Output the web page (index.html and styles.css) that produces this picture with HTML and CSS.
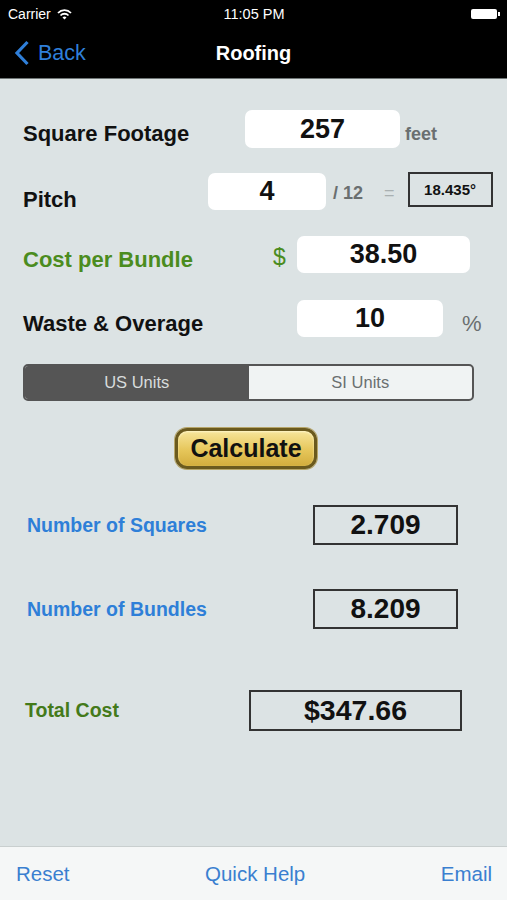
FILE: index.html
```html
<!DOCTYPE html>
<html lang="en">
<head>
  <meta charset="UTF-8">
  <meta name="viewport" content="width=device-width, initial-scale=1.0">
  <title>Roofing</title>
  <link rel="stylesheet" href="styles.css">
</head>
<body>

  <div class="topBar">
    <div class="statusBar">
      <span class="carrier">Carrier
        <svg class="wifi" width="15" height="11" viewBox="0 0 15 11">
          <path d="M1 4 A9 9 0 0 1 14 4" fill="none" stroke="#fff" stroke-width="1.8"/>
          <path d="M3.5 6.5 A5.5 5.5 0 0 1 11.5 6.5" fill="none" stroke="#fff" stroke-width="1.8"/>
          <path d="M7.5 10.5 L5.5 8.5 A3 3 0 0 1 9.5 8.5 Z" fill="#fff"/>
        </svg>
      </span>
      <span class="clock">11:05 PM</span>
      <span class="battery"><span class="batteryCap"></span></span>
    </div>
    <div class="navBar">
      <span class="backLink">
        <svg width="16" height="26" viewBox="0 0 16 26">
          <path d="M13.5 2 L3 13 L13.5 24" fill="none" stroke="#2f7fd9" stroke-width="3.2"/>
        </svg>
        Back
      </span>
      <span class="navTitle">Roofing</span>
    </div>
  </div>

  <div class="main">
    <div class="row rowFootage">
      <span class="label labelFootage">Square Footage</span>
      <span class="inputBox boxFootage">257</span>
      <span class="unit unitFeet">feet</span>
    </div>

    <div class="row rowPitch">
      <span class="label labelPitch">Pitch</span>
      <span class="inputBox boxPitch">4</span>
      <span class="unit unitTwelve">/ 12</span>
      <span class="equals">=</span>
      <span class="angleBox">18.435°</span>
    </div>

    <div class="row rowCost">
      <span class="label labelCost green">Cost per Bundle</span>
      <span class="dollar">$</span>
      <span class="inputBox boxCost">38.50</span>
    </div>

    <div class="row rowWaste">
      <span class="label labelWaste">Waste &amp; Overage</span>
      <span class="inputBox boxWaste">10</span>
      <span class="percent">%</span>
    </div>

    <div class="segment">
      <span class="segItem active">US Units</span>
      <span class="segItem">SI Units</span>
    </div>

    <div class="calcWrap">
      <button class="calcBtn">Calculate</button>
    </div>

    <div class="resultRow rowSquares">
      <span class="resultLabel">Number of Squares</span>
      <span class="resultBox">2.709</span>
    </div>

    <div class="resultRow rowBundles">
      <span class="resultLabel">Number of Bundles</span>
      <span class="resultBox">8.209</span>
    </div>

    <div class="resultRow rowTotal">
      <span class="resultLabel totalLabel">Total Cost</span>
      <span class="resultBox totalBox">$347.66</span>
    </div>
  </div>

  <div class="toolBar">
    <span class="toolLink">Reset</span>
    <span class="toolLink">Quick Help</span>
    <span class="toolLink">Email</span>
  </div>

</body>
</html>
```

FILE: styles.css
```css
    html, body {
      margin: 0;
      padding: 0;
      height: 100%;
    }

    body {
      font-family: 'Liberation Sans', Arial, sans-serif;
      background-color: #dce3e4;
      display: flex;
      flex-direction: column;
      width: 507px;
      height: 900px;
      overflow: hidden;
    }

    .topBar {
      background-color: #000;
      color: #fff;
      border-bottom: 1px solid #6f7676;
    }

    .statusBar {
      height: 28px;
      display: flex;
      align-items: center;
      justify-content: space-between;
      padding: 0 7px 0 8px;
      font-size: 14px;
    }

    .carrier {
      display: flex;
      align-items: center;
      gap: 6px;
      width: 110px;
    }

    .clock {
      font-size: 14.5px;
    }

    .battery {
      width: 110px;
      display: flex;
      justify-content: flex-end;
      align-items: center;
    }

    .battery::before {
      content: '';
      width: 26px;
      height: 10px;
      background-color: #fff;
      border-radius: 2px;
    }

    .batteryCap {
      width: 2px;
      height: 4px;
      background-color: #fff;
      margin-left: 1px;
    }

    .navBar {
      height: 50px;
      display: flex;
      align-items: center;
    }

    .backLink {
      color: #2f7fd9;
      font-size: 21.5px;
      display: flex;
      align-items: center;
      gap: 8px;
      padding-left: 14px;
      width: 110px;
    }

    .navTitle {
      font-size: 20px;
      font-weight: bold;
      flex: 1;
      text-align: center;
      margin-right: 124px;
    }

    .main {
      flex: 1;
      display: flex;
      flex-direction: column;
    }

    .row {
      display: flex;
      align-items: center;
      padding-left: 23px;
      height: 38px;
    }

    .label {
      font-size: 22px;
      font-weight: bold;
      color: #111;
      position: relative;
      top: 5px;
    }

    .green {
      color: #4b8c1e;
    }

    .inputBox {
      background-color: #fff;
      border-radius: 7px;
      height: 38px;
      display: flex;
      align-items: center;
      justify-content: center;
      font-size: 27px;
      font-weight: bold;
      color: #111;
    }

    .unit {
      color: #6a6f70;
      font-size: 18px;
      font-weight: bold;
    }

    .rowFootage {
      margin-top: 31px;
    }

    .labelFootage {
      width: 222px;
    }

    .boxFootage {
      width: 155px;
    }

    .unitFeet {
      margin-left: 5px;
      position: relative;
      top: 5px;
    }

    .rowPitch {
      margin-top: 25px;
      height: 37px;
    }

    .labelPitch {
      width: 185px;
      top: 8px;
    }

    .boxPitch {
      width: 118px;
      height: 37px;
    }

    .unitTwelve {
      margin-left: 7px;
      position: relative;
      top: 2px;
    }

    .equals {
      color: #a9b0b1;
      font-size: 18px;
      margin-left: 21px;
      position: relative;
      top: 2px;
    }

    .angleBox {
      margin-left: 13px;
      width: 81px;
      height: 31px;
      border: 2px solid #333;
      display: flex;
      align-items: center;
      justify-content: center;
      font-size: 15px;
      font-weight: bold;
      color: #111;
      position: relative;
      top: -2px;
    }

    .rowCost {
      margin-top: 26px;
      height: 37px;
    }

    .labelCost {
      width: 250px;
    }

    .dollar {
      width: 24px;
      color: #4b8c1e;
      font-size: 23px;
      position: relative;
      top: 3px;
    }

    .boxCost {
      width: 173px;
      height: 37px;
    }

    .rowWaste {
      margin-top: 27px;
      height: 37px;
    }

    .labelWaste {
      width: 274px;
    }

    .boxWaste {
      width: 146px;
      height: 37px;
    }

    .percent {
      margin-left: 19px;
      color: #6a6f70;
      font-size: 22px;
      position: relative;
      top: 5px;
    }

    .segment {
      margin: 27px 0 0 23px;
      width: 447px;
      height: 33px;
      border: 2px solid #555;
      border-radius: 5px;
      display: flex;
      overflow: hidden;
      background-color: #f0f3f3;
    }

    .segItem {
      flex: 1;
      display: flex;
      align-items: center;
      justify-content: center;
      font-size: 16.5px;
      color: #6a6f70;
    }

    .segItem.active {
      background-color: #555;
      color: #d8dcdc;
    }

    .calcWrap {
      margin-top: 27px;
      padding-left: 175px;
    }

    .calcBtn {
      width: 142px;
      height: 41px;
      border: 3px solid #6b5a1e;
      border-radius: 12px;
      background: linear-gradient(#f7e59a, #e6c65a 55%, #d3ad3d);
      box-shadow: 0 0 0 1px #b7a66a, inset 0 1px 2px #fff6c8;
      font-family: 'Liberation Sans', Arial, sans-serif;
      font-size: 25px;
      font-weight: bold;
      color: #111;
      padding: 0;
    }

    .resultRow {
      display: flex;
      align-items: center;
      height: 40px;
    }

    .resultLabel {
      font-size: 19.5px;
      font-weight: bold;
      color: #2e7fd8;
      padding-left: 27px;
      width: 286px;
    }

    .resultBox {
      width: 141px;
      height: 36px;
      border: 2px solid #333;
      display: flex;
      align-items: center;
      justify-content: center;
      font-size: 28px;
      font-weight: bold;
      color: #111;
    }

    .rowSquares {
      margin-top: 36px;
    }

    .rowBundles {
      margin-top: 44px;
    }

    .rowTotal {
      margin-top: 61px;
      height: 41px;
    }

    .totalLabel {
      color: #447a1a;
      font-size: 19.5px;
      padding-left: 25px;
      width: 224px;
    }

    .totalBox {
      width: 209px;
      height: 37px;
      font-size: 28.5px;
    }

    .toolBar {
      height: 53px;
      background-color: #f5f7f7;
      border-top: 1px solid #c9cfcf;
      display: flex;
      align-items: center;
      justify-content: space-between;
      padding: 0 15px 0 16px;
    }

    .toolLink {
      color: #3a7fd0;
      font-size: 20.5px;
    }
```
